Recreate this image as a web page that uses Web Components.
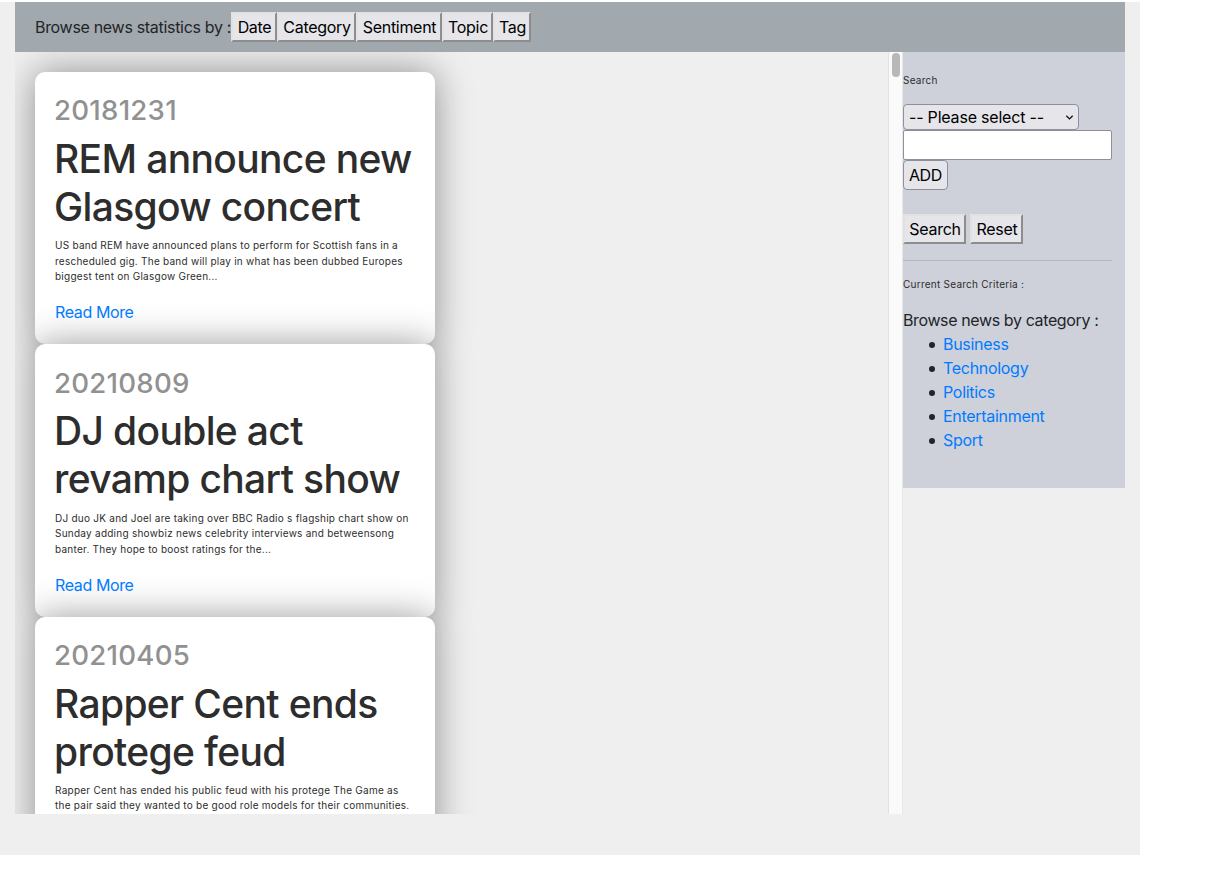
<!DOCTYPE html>
<html lang="en">
<head>
<meta charset="utf-8">
<title>News browser</title>
<style>
html,body{margin:0;background:#fff;overflow:hidden}
body{font:16px/24px Inter,"Liberation Sans",sans-serif;color:#212529;padding-top:2px}
</style>
</head>
<body>
<news-app></news-app>
<script>
const define = (name, html, setup) => customElements.define(name, class extends HTMLElement {
  connectedCallback() {
    if (this.shadowRoot) return;
    this.attachShadow({mode: 'open'}).innerHTML = html;
    if (setup) setup(this, this.shadowRoot);
  }
});

define('raised-button', `<style>
:host{display:block;height:30px;flex:none}
button{box-sizing:border-box;width:100%;height:30px;margin:0;padding:0 0 0 1px;display:block;white-space:nowrap;
 background:#e5e5ea;border:2px solid;border-color:#e2e2e2 #8d8d8d #8d8d8d #e2e2e2;color:#000;font:inherit;letter-spacing:-.3px}
:host([flat]) button{border:1px solid #8f8f9d;border-radius:4px;padding:0}
</style><button><slot></slot></button>`, (el) => { el.style.width = el.getAttribute('width') + 'px'; });

define('stats-bar', `<style>
:host{display:flex;align-items:center;box-sizing:border-box;height:50px;padding:0 20px;background:#a1a8ae}
span{width:196px;white-space:nowrap;letter-spacing:-.31px}
</style><span>Browse news statistics by :</span>
<raised-button width="46">Date</raised-button><raised-button width="79">Category</raised-button><raised-button width="86">Sentiment</raised-button><raised-button width="51">Topic</raised-button><raised-button width="38">Tag</raised-button>`);

define('news-card', `<style>
:host{display:block;box-sizing:border-box;width:400px;padding:20px;border-radius:10px;background:#fff;box-shadow:0 0 37px rgba(0,0,0,.4);color:#2d2d2d;flex:none}
h3{margin:0 0 5.6px -1px;padding-top:2.4px;font-weight:500;font-size:27.6px;line-height:33.6px;color:#919191;letter-spacing:.25px}
h1{margin:0 0 6.5px -1px;padding-top:1.5px;font-weight:500;font-size:39px;line-height:48px;letter-spacing:-.65px;white-space:nowrap}
p{margin:0 0 15.4px;padding-top:.6px;font-size:10px;line-height:15.6px;letter-spacing:.25px;white-space:nowrap}
div{height:24px;letter-spacing:-.38px}
:host([clipped]){min-height:272.4px}
:host([clipped]) div{display:none}
a{color:#007bff;text-decoration:none}
::slotted(span){display:block}
</style><h3><slot name="date"></slot></h3><h1><slot name="title"></slot></h1><p><slot></slot></p><div><a href="#">Read More</a></div>`);

define('scroll-track', `<style>
:host{display:block;box-sizing:border-box;width:15px;padding:1px 2px 0 3px;background:#fafafa;border-left:1px solid #e2e2e2;border-right:1px solid #e8e8e8;flex:none}
div{width:8px;height:24px;border-radius:4px;background:#b8b8b8}
</style><div></div>`);

define('news-feed', `<style>
:host{display:flex;height:762px;width:888px;overflow:hidden;flex:none}
main{flex:1;padding:20px;overflow:hidden}
</style><main>
<news-card><span slot="date">20181231</span><span slot="title">REM announce new</span><span slot="title">Glasgow concert</span>
<span>US band REM have announced plans to perform for Scottish fans in a</span><span>rescheduled gig. The band will play in what has been dubbed Europes</span><span>biggest tent on Glasgow Green...</span></news-card>
<news-card><span slot="date">20210809</span><span slot="title">DJ double act</span><span slot="title">revamp chart show</span>
<span>DJ duo JK and Joel are taking over BBC Radio s flagship chart show on</span><span>Sunday adding showbiz news celebrity interviews and betweensong</span><span>banter. They hope to boost ratings for the...</span></news-card>
<news-card clipped><span slot="date">20210405</span><span slot="title">Rapper Cent ends</span><span slot="title">protege feud</span>
<span>Rapper Cent has ended his public feud with his protege The Game as</span><span>the pair said they wanted to be good role models for their communities.</span></news-card>
</main><scroll-track></scroll-track>`);

define('search-panel', `<style>
:host{display:block;box-sizing:border-box;width:222px;height:436px;padding:20px 13px 20px 0;background:#ced1da;flex:none}
p{margin:0 0 15.4px;padding-top:.6px;font-size:10px;line-height:15.6px;letter-spacing:.25px;color:#2d2d2d}
.select{position:relative;width:176px;height:26px}
select{display:block;box-sizing:border-box;width:176px;height:26px;margin:0;padding:0 0 0 5px;appearance:none;border:1px solid #8f8f9d;border-radius:4px;background:#e5e5ea;color:#000;font:inherit;letter-spacing:-.2px}
svg{position:absolute;right:5px;top:9px}
input{display:block;box-sizing:border-box;width:209px;height:30px;margin:0;border:1px solid #8f8f9d;border-radius:2px;background:#fff}
.row{display:flex;gap:4px;margin-top:24px}
hr{margin:16px 0;border:0;border-top:1px solid #b4b7bf}
.label{letter-spacing:-.38px;white-space:nowrap}
ul{margin:0;padding:0 0 0 26px;list-style:none;letter-spacing:-.3px}
li{display:flex;align-items:center;gap:8px}
li::before{content:"";width:6px;height:6px;margin-top:1px;border-radius:50%;background:#212529}
a{color:#007bff;text-decoration:none}
</style>
<p>Search</p>
<div class="select"><select><option>-- Please select --</option></select><svg width="9" height="9" viewBox="0 0 9 9" fill="none" stroke="#111" stroke-width="1.3"><path d="M1.3 2.7 4.5 5.9 7.7 2.7"/></svg></div>
<input aria-label="Search term">
<raised-button flat width="45">ADD</raised-button>
<div class="row"><raised-button width="63">Search</raised-button><raised-button width="53">Reset</raised-button></div>
<hr><p>Current Search Criteria :</p>
<div class="label">Browse news by category :</div>
<ul><li><a href="#">Business</a></li><li><a href="#">Technology</a></li><li><a href="#">Politics</a></li><li><a href="#">Entertainment</a></li><li><a href="#">Sport</a></li></ul>`);

define('news-app', `<style>
:host{display:block;box-sizing:border-box;width:1140px;height:853px;padding:0 15px;background:#efefef}
section{display:flex;align-items:flex-start}
</style><stats-bar></stats-bar><section><news-feed></news-feed><search-panel></search-panel></section>`);
</script>
</body>
</html>
